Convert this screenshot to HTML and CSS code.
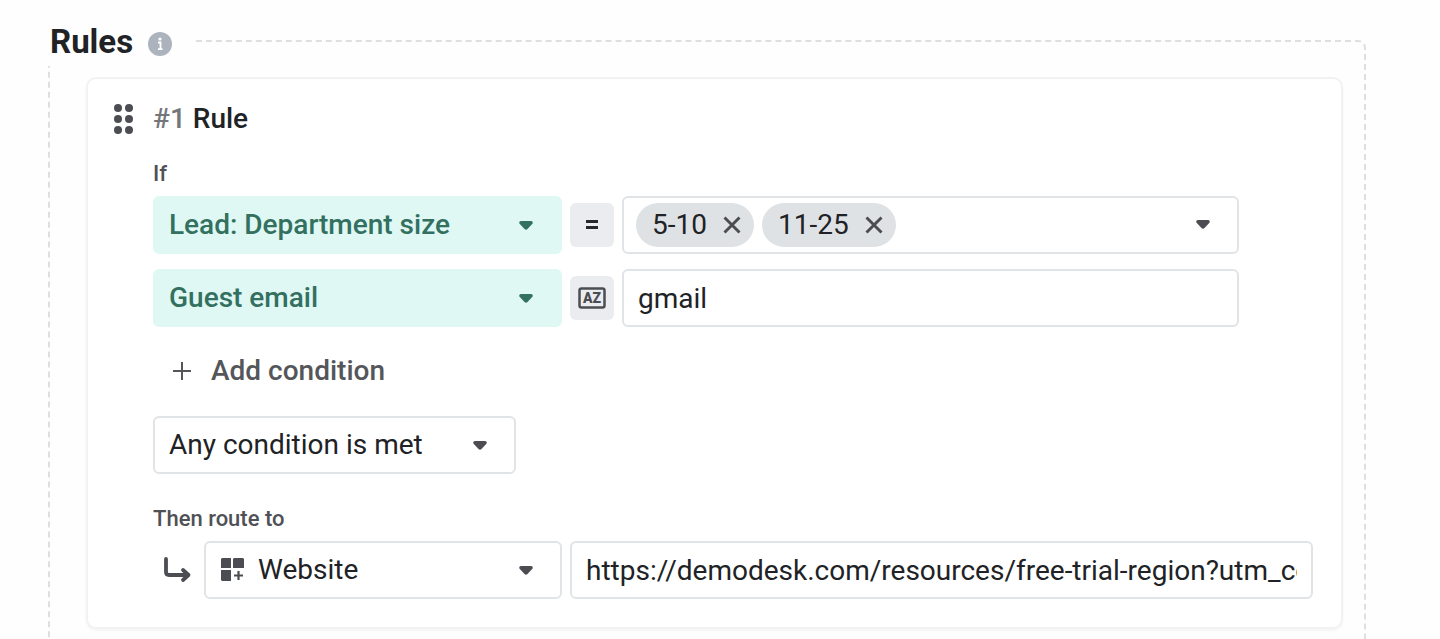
FILE: index.html
```html
<!DOCTYPE html>
<html lang="en">
<head>
    <meta charset="UTF-8">
    <meta name="viewport" content="width=device-width, initial-scale=1.0">
    <title>Routing rules</title>
    <link rel="stylesheet" href="styles.css">
</head>
<body>
    <svg width="0" height="0" class="sprite" aria-hidden="true">
        <symbol id="caret" viewBox="0 0 14 10">
            <path d="M2 0h10c1.700 0 2.300 1.800 1.200 3L8.500 8c-.9.9-2.100.9-3 0L.8 3C-.3 1.800.3 0 2 0z" fill="currentColor"/>
        </symbol>
        <symbol id="cross" viewBox="0 0 18 18">
            <path d="M1.500 1.500l15 15M16.500 1.500l-15 15" fill="none" stroke="currentColor" stroke-width="2.900"/>
        </symbol>
    </svg>

    <section class="rules">
        <header class="rules-header">
            <h1>Rules</h1>
            <button class="info" type="button" aria-label="About rules">
                <svg width="24" height="24" viewBox="0 0 24 24">
                    <circle cx="12" cy="12" r="12" fill="#adb3bd"/>
                    <circle cx="12" cy="7" r="1.600" fill="#fff"/>
                    <path d="M10 10.500h2.500v6.500M10 17.200h4.500" fill="none" stroke="#fff" stroke-width="1.800"/>
                </svg>
            </button>
        </header>

        <form class="card">
            <button class="drag" type="button" aria-label="Move rule">
                <svg width="20" height="30" viewBox="0 0 20 30" fill="currentColor">
                    <circle cx="4" cy="4" r="4"/><circle cx="15" cy="4" r="4"/>
                    <circle cx="4" cy="15" r="4"/><circle cx="15" cy="15" r="4"/>
                    <circle cx="4" cy="26" r="4"/><circle cx="15" cy="26" r="4"/>
                </svg>
            </button>

            <div class="rule">
                <h2><span class="number">#1</span> Rule</h2>

                <p class="label">If</p>
                <div class="condition">
                    <div class="select green">
                        <select aria-label="First condition field">
                            <option>Lead: Department size</option>
                        </select>
                        <svg class="caret"><use href="#caret"/></svg>
                    </div>
                    <button class="operator" type="button" aria-label="Equals">
                        <svg width="14" height="12" viewBox="0 0 14 12">
                            <path d="M1 2.500h12M1 8.500h12" stroke="#26282b" stroke-width="3"/>
                        </svg>
                    </button>
                    <div class="field tags">
                        <span class="chip">5-10 <button type="button" aria-label="Remove 5-10"><svg width="18" height="18"><use href="#cross"/></svg></button></span>
                        <span class="chip">11-25 <button type="button" aria-label="Remove 11-25"><svg width="18" height="18"><use href="#cross"/></svg></button></span>
                        <button class="open" type="button" aria-label="Show sizes"><svg width="14" height="10"><use href="#caret"/></svg></button>
                    </div>
                </div>

                <div class="condition">
                    <div class="select green">
                        <select aria-label="Second condition field">
                            <option>Guest email</option>
                        </select>
                        <svg class="caret"><use href="#caret"/></svg>
                    </div>
                    <button class="operator" type="button" aria-label="Contains text">
                        <svg width="28" height="22" viewBox="0 0 28 22">
                            <rect x="1.500" y="1.500" width="25" height="19" rx="2" fill="none" stroke="#4b4d52" stroke-width="2.500"/>
                            <text x="14" y="16" text-anchor="middle" class="az">AZ</text>
                        </svg>
                    </button>
                    <input class="field" type="text" value="gmail" aria-label="Guest email value">
                </div>

                <button class="add" type="button">
                    <svg width="18" height="18" viewBox="0 0 18 18">
                        <path d="M9 0v18M0 9h18" stroke="currentColor" stroke-width="2"/>
                    </svg>
                    Add condition
                </button>

                <div class="select match">
                    <select aria-label="Match">
                        <option>Any condition is met</option>
                    </select>
                    <svg class="caret"><use href="#caret"/></svg>
                </div>

                <label class="label route-label" for="target">Then route to</label>
                <div class="route">
                    <svg class="arrow" width="28" height="26" viewBox="0 0 28 26">
                        <path d="M2 2v13q0 3 3 3h19M19 13l5.500 5-5.500 5" fill="none" stroke="currentColor" stroke-width="3.800" stroke-linecap="round" stroke-linejoin="round"/>
                    </svg>
                    <div class="select website">
                        <select id="target">
                            <option>Website</option>
                        </select>
                        <svg class="grid-icon" width="23" height="23" viewBox="0 0 23 23">
                            <path d="M1 0h9v10H0V1zM13 0h9l1 1v9H12V1zM0 12h10v11H1l-1-1z" fill="currentColor"/>
                            <path d="M17.500 13v9M13 17.500h9" stroke="currentColor" stroke-width="2.200"/>
                        </svg>
                        <svg class="caret"><use href="#caret"/></svg>
                    </div>
                    <input class="field" type="text" value="https://demodesk.com/resources/free-trial-region?utm_content=demo" aria-label="Website address">
                </div>
            </div>
        </form>
    </section>
</body>
</html>
```
FILE: styles.css
```css
* {
    margin: 0;
    padding: 0;
    box-sizing: border-box;
}

body {
    font-family: Roboto, sans-serif;
    font-size: 28px;
    line-height: 32px;
    color: #202225;
    background: #fefefe;
    overflow: hidden;
}

button, input, select {
    font: inherit;
    color: inherit;
    border: none;
    background: none;
}

button, select {
    cursor: pointer;
}

svg {
    display: block;
    flex: none;
}

.sprite {
    position: absolute;
}

.rules {
    margin: 40px 74px 0 48px;
    padding: 0 21px 40px 36px;
    border: 2px dashed #dfdfe0;
    border-radius: 8px;
}

/* sits on top of the dashed border */
.rules-header {
    display: flex;
    align-items: center;
    gap: 15px;
    width: 148px;
    height: 46px;
    margin: -22px 0 11px -38px;
    padding: 0 0 2px 2px;
    background: #fefefe;
}

.rules-header h1 {
    font-size: 33px;
    font-weight: 700;
    line-height: 40px;
}

.info {
    padding-top: 3px;
}

.card {
    display: flex;
    align-items: flex-start;
    gap: 19px;
    padding: 24px 28px 28px 26px;
    background: #fff;
    border: 2px solid #f2f2f3;
    border-radius: 10px;
    box-shadow: 0 2px 3px rgba(0, 0, 0, 0.04);
}

.drag {
    padding-top: 1px;
    color: #4b4d52;
}

.rule {
    flex: 1;
    min-width: 0;
}

.rule h2 {
    font-size: 28px;
    font-weight: 500;
}

.number {
    color: #74767b;
}

.label {
    display: block;
    margin: 24px 0 7px;
    font-size: 22px;
    font-weight: 500;
    line-height: 30px;
    color: #4f5156;
}

.route-label {
    margin-top: 30px;
}

.condition {
    display: grid;
    grid-template-columns: 409px 44px 1fr;
    align-items: center;
    gap: 8px;
    margin: 0 74px 15px 0;
}

.select {
    position: relative;
    color: #4b4d52;
}

.select select {
    display: block;
    width: 100%;
    height: 58px;
    padding: 0 60px 0 14px;
    border: 2px solid #e1e4e6;
    border-radius: 6px;
    background: #fff;
    color: #202225;
    appearance: none;
}

.select.green {
    color: #33705f;
}

.green select {
    border-color: #dff8f4;
    background: #dff8f4;
    color: #33705f;
    font-weight: 500;
}

.caret {
    position: absolute;
    top: 25px;
    right: 29px;
    width: 14px;
    height: 10px;
    pointer-events: none;
}

.operator {
    display: flex;
    align-items: center;
    justify-content: center;
    width: 44px;
    height: 44px;
    border-radius: 6px;
    background: #ebecf0;
}

.az {
    font-size: 14px;
    font-weight: 900;
    fill: #4b4d52;
}

.field {
    width: 100%;
    min-width: 0;
    height: 58px;
    padding: 0 14px;
    border: 2px solid #e1e4e6;
    border-radius: 6px;
    background: #fff;
}

.tags {
    display: flex;
    align-items: center;
    gap: 8px;
    padding: 0 12px;
}

.chip {
    display: flex;
    align-items: center;
    gap: 16px;
    height: 44px;
    padding: 0 13px 0 16px;
    border-radius: 22px;
    background: #dfe2e5;
}

.chip button {
    color: #4b4d52;
}

.open {
    margin-left: auto;
    padding: 15px;
    color: #4b4d52;
}

.add {
    display: flex;
    align-items: center;
    gap: 20px;
    height: 58px;
    margin-bottom: 16px;
    padding: 0 20px;
    font-weight: 500;
    color: #54565a;
}

.match {
    width: 363px;
}

.route {
    display: flex;
    align-items: center;
    gap: 8px;
}

.arrow {
    margin: 0 4px 0 11px;
    color: #4b4d52;
}

.website {
    flex: none;
    width: 358px;
}

.website select {
    padding-left: 52px;
}

.grid-icon {
    position: absolute;
    top: 17px;
    left: 17px;
    pointer-events: none;
}
```
